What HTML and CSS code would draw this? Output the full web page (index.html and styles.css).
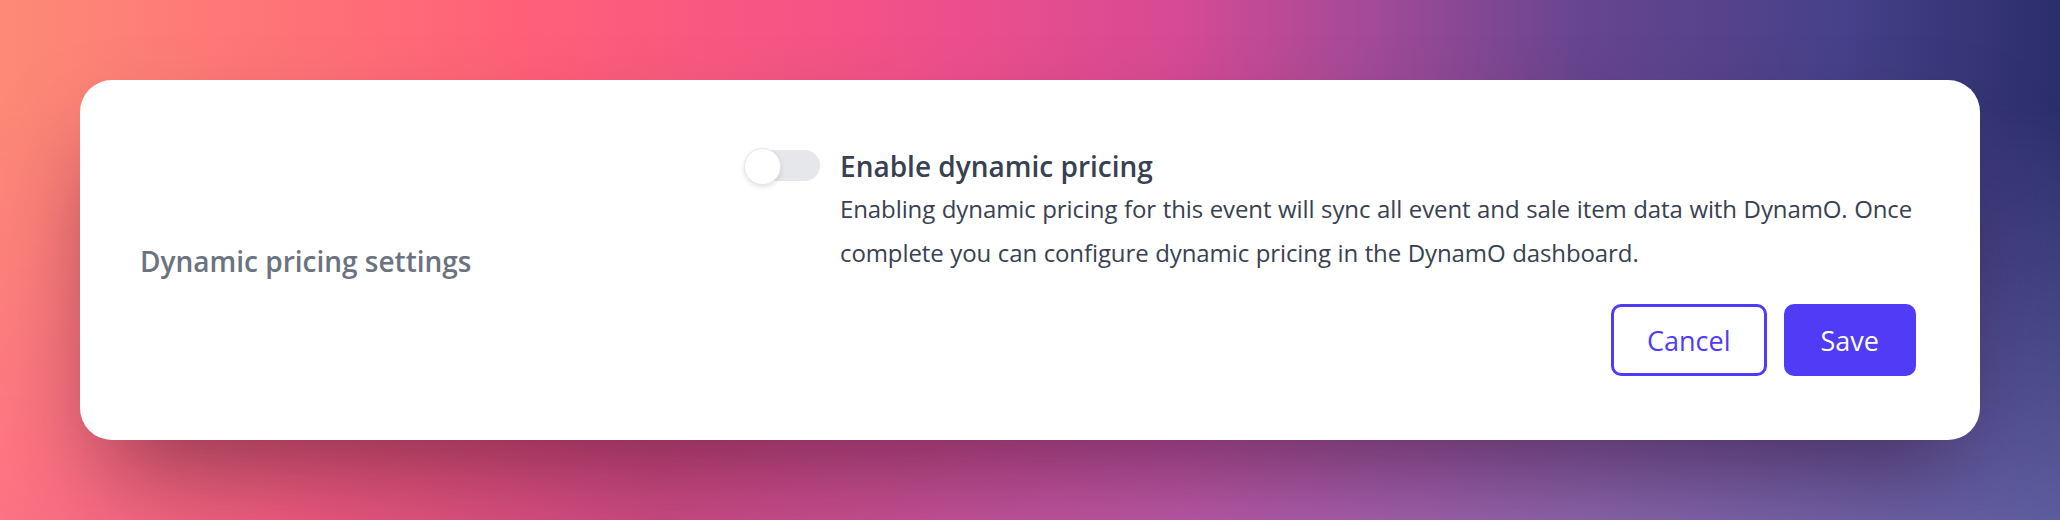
FILE: index.html
```html
<!DOCTYPE html>
<html lang="en">
<head>
<meta charset="utf-8">
<title>Dynamic pricing settings</title>
<link rel="stylesheet" href="styles.css">
</head>
<body>
<div class="page">
  <section class="card">
    <div class="label-col">
      <h2 class="label">Dynamic pricing settings</h2>
    </div>
    <div class="main-col">
      <div class="setting">
        <div class="toggle" role="switch" aria-checked="false">
          <span class="track"></span>
          <span class="knob"></span>
        </div>
        <div class="setting-text">
          <h3 class="title">Enable dynamic pricing</h3>
          <p class="desc">Enabling dynamic pricing for this event will sync all event and sale item data with DynamO. Once<br>complete you can configure dynamic pricing in the DynamO dashboard.</p>
        </div>
      </div>
      <div class="actions">
        <button class="btn btn-outline" type="button">Cancel</button>
        <button class="btn btn-primary" type="button">Save</button>
      </div>
    </div>
  </section>
</div>
</body>
</html>
```

FILE: styles.css
```css
* { box-sizing: border-box; }

html, body {
  margin: 0;
  height: 100%;
}

body {
  font-family: "Open Sans", "Noto Sans", "Liberation Sans", sans-serif;
  background: linear-gradient(90deg,
    #ff6b8a 0px,
    #e85282 330px,
    #c04788 660px,
    #b45fb0 1180px,
    #9a72b8 1580px,
    #6d6cb0 2060px);
  overflow: hidden;
}

.page {
  position: relative;
  min-height: 100%;
  padding: 80px 80px 0 80px;
}

.page::before {
  content: "";
  position: absolute;
  inset: 0;
  background: linear-gradient(90deg,
    #fd8a76 0px,
    #ff6078 525px,
    #f0508a 920px,
    #d64a94 1180px,
    #a04a98 1380px,
    #67458f 1580px,
    #46418a 1840px,
    #2b2e6c 2060px);
  -webkit-mask-image: linear-gradient(to bottom, #000 0%, #000 20%, rgba(0,0,0,0.25) 100%);
  mask-image: linear-gradient(to bottom, #000 0%, #000 20%, rgba(0,0,0,0.25) 100%);
  z-index: 0;
}

.card {
  position: relative;
  z-index: 1;
  background: #ffffff;
  border-radius: 32px;
  padding: 67px 64px 64px 60px;
  display: grid;
  grid-template-columns: 604px minmax(0, 1fr);
  box-shadow: 0 50px 100px -24px rgba(40, 0, 30, 0.5);
}

.label-col {
  display: flex;
  align-items: center;
}

.label {
  margin: 0;
  font-size: 28px;
  font-weight: 600;
  color: #6b7280;
  line-height: 1.4;
}

.main-col {
  display: flex;
  flex-direction: column;
  min-width: 0;
}

.setting {
  display: flex;
  align-items: flex-start;
  gap: 20px;
}

.toggle {
  position: relative;
  flex: none;
  width: 76px;
  height: 37px;
  margin-top: 1px;
}

.track {
  position: absolute;
  left: 6px;
  right: 0;
  top: 2px;
  height: 31px;
  border-radius: 16px;
  background: #e5e7eb;
}

.knob {
  position: absolute;
  left: 0;
  top: 0;
  width: 37px;
  height: 37px;
  border-radius: 50%;
  background: #ffffff;
  border: 1px solid #e5e7eb;
  box-shadow: 0 2px 5px rgba(0, 0, 0, 0.12);
}

.setting-text {
  flex: 1;
  min-width: 0;
}

.title {
  margin: 0;
  font-size: 28px;
  font-weight: 600;
  color: #374151;
  line-height: 38px;
}

.desc {
  margin: 2px 0 0 0;
  font-size: 24px;
  font-weight: 400;
  color: #374151;
  line-height: 44px;
  word-spacing: 0.5px;
  letter-spacing: -0.1px;
  white-space: nowrap;
}

.actions {
  display: flex;
  justify-content: flex-end;
  gap: 17px;
  margin-top: 29px;
}

.btn {
  height: 72px;
  border-radius: 10px;
  font-family: inherit;
  font-size: 27px;
  font-weight: 500;
  line-height: 1;
  cursor: pointer;
  display: inline-flex;
  align-items: center;
  justify-content: center;
}

.btn-outline {
  background: #ffffff;
  color: #503bf6;
  border: 3px solid #503bf6;
  padding: 0 33px;
}

.btn-primary {
  background: #503bf6;
  color: #ffffff;
  border: 3px solid #503bf6;
  padding: 0 34px;
}
```
